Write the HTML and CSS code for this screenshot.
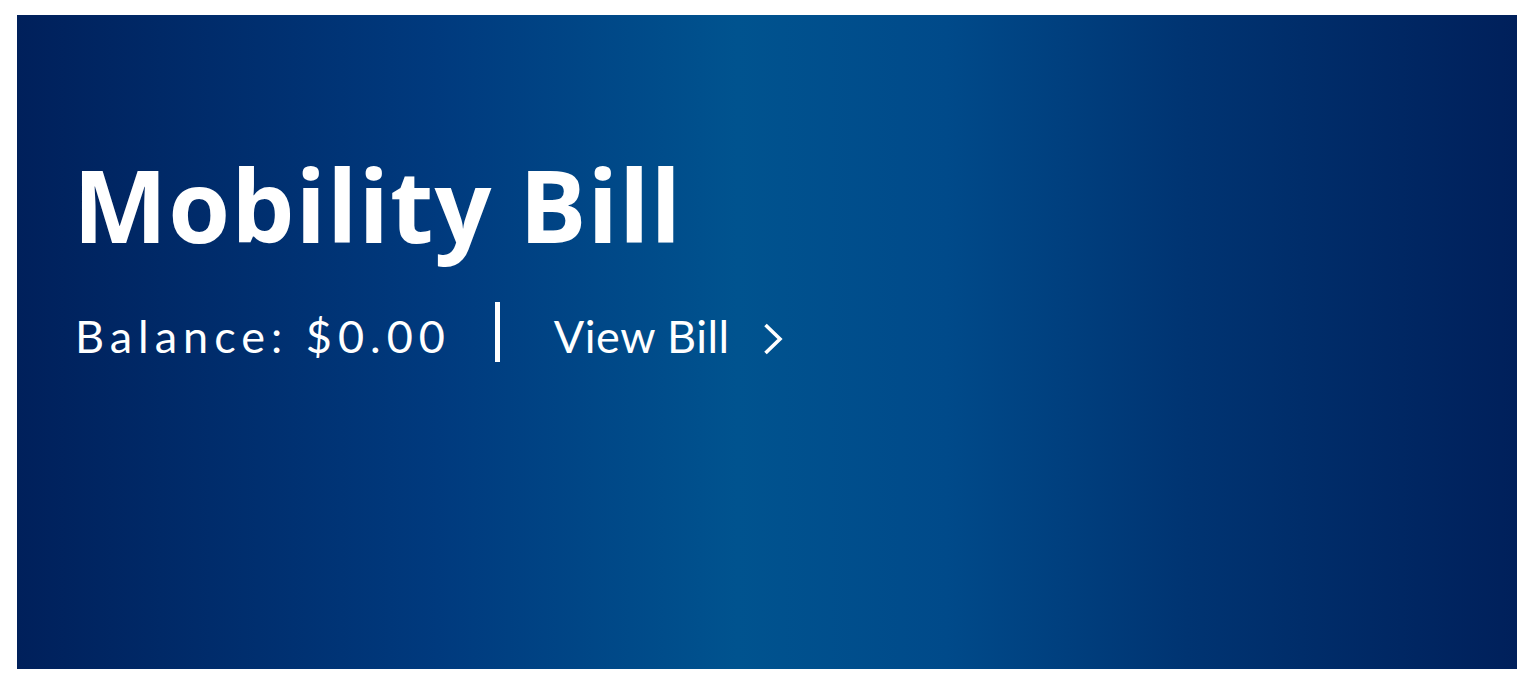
FILE: index.html
```html
<!DOCTYPE html>
<html lang="en">
<head>
<meta charset="utf-8">
<title>Mobility Bill</title>
<link rel="stylesheet" href="styles.css">
</head>
<body>
<section class="banner">
  <h1 class="title">Mobility Bill</h1>
  <div class="meta">
    <span class="balance">Balance: $0.00</span>
    <span class="divider"></span>
    <a class="view" href="#"><span class="view-text">View Bill</span><svg class="chev" viewBox="0 0 20 32" width="20" height="32" aria-hidden="true"><path d="M2.5 2 L17 16 L2.5 30" fill="none" stroke="#fff" stroke-width="3.6"/></svg></a>
  </div>
</section>
</body>
</html>
```
FILE: styles.css
```css
html, body { background: #fff; }
body { margin: 15px 20px 21px 17px; }
.banner {
  box-sizing: border-box;
  width: 1500px;
  height: 654px;
  padding: 129px 0 0 56px;
  background: linear-gradient(90deg, #00205b 0%, #003a7e 28%, #00538f 48%, #004a8a 62%, #003472 78%, #00205b 100%);
  color: #fff;
}
.title {
  margin: 0;
  font-family: "Open Sans", "Liberation Sans", sans-serif;
  font-weight: 700;
  font-size: 100px;
  line-height: 120px;
  letter-spacing: 1px;
}
.meta {
  display: flex;
  align-items: flex-start;
  margin-top: 38px;
  height: 60px;
}
.balance,
.view {
  font-family: "Lato", "Liberation Sans", sans-serif;
  font-size: 45px;
  font-weight: 400;
  line-height: 60px;
  padding-top: 4px;
}
.balance {
  margin-left: 2px;
  letter-spacing: 6px;
}
.divider {
  width: 5px;
  height: 60px;
  background: #fff;
  margin: 0 54px 0 44px;
}
.view {
  display: flex;
  align-items: center;
  color: #fff;
  text-decoration: none;
}
.view-text { letter-spacing: 0.5px; }
.chev { margin: 6px 0 0 33px; }
```
